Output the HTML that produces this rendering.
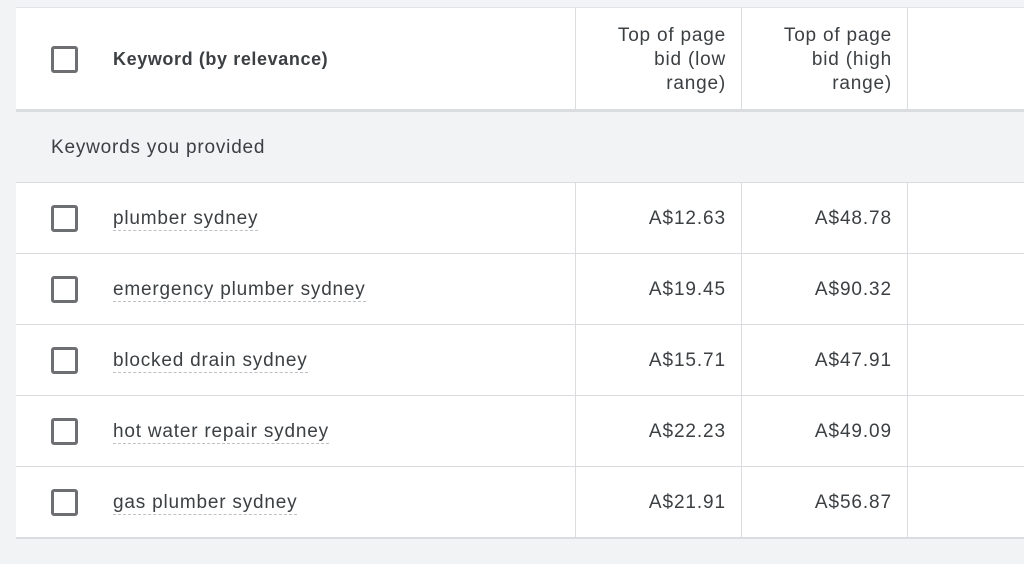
<!DOCTYPE html>
<html><head><meta charset="utf-8"><style>
*{margin:0;padding:0;box-sizing:border-box}
body{width:1024px;height:564px;background:#f1f3f4;position:relative;overflow:hidden;font-family:"Liberation Sans",Arial,sans-serif;color:#3c4043}
.abs{position:absolute}
.white{background:#fff;left:16px;right:0}
.hl{position:absolute;left:16px;right:0;height:1px;background:#dadce0}
.vl{position:absolute;width:1px;background:#dadce0}
.cb{position:absolute;left:51px;width:27px;height:27px;border:3px solid #6d6f72;border-radius:3px;background:#fff}
.kw{position:absolute;left:113px;font-size:19px;letter-spacing:0.8px;line-height:22px;border-bottom:1px dashed #bdc1c6;color:#3c4043}
.num{position:absolute;font-size:19px;letter-spacing:0.9px;line-height:22px;text-align:right;color:#3c4043}
.hd{position:absolute;font-size:19px;letter-spacing:0.8px;line-height:24px;text-align:right;color:#3c4043}
</style></head><body>
<div class="abs white" style="top:8px;height:101px"></div>
<div class="hl" style="top:7px;background:#e0e2e6"></div>
<div class="hl" style="top:109px;height:3px;background:#dadce0"></div>
<div class="hl" style="top:182px"></div>
<div class="abs white" style="top:183px;height:354px"></div>
<div class="hl" style="top:253px"></div>
<div class="hl" style="top:324px"></div>
<div class="hl" style="top:395px"></div>
<div class="hl" style="top:466px"></div>
<div class="hl" style="top:537px;height:2px"></div>
<div class="vl" style="left:575px;top:8px;height:101px"></div>
<div class="vl" style="left:741px;top:8px;height:101px"></div>
<div class="vl" style="left:907px;top:8px;height:101px"></div>
<div class="vl" style="left:575px;top:183px;height:354px"></div>
<div class="vl" style="left:741px;top:183px;height:354px"></div>
<div class="vl" style="left:907px;top:183px;height:354px"></div>

<div class="cb" style="top:46px"></div>
<div class="abs" style="left:113px;top:48px;font-size:18px;letter-spacing:0.6px;font-weight:bold;line-height:22px;color:#3c4043">Keyword (by relevance)</div>
<div class="hd" style="left:560px;width:166px;top:24px">Top of page<br>bid (low<br>range)</div>
<div class="hd" style="left:726px;width:166px;top:24px">Top of page<br>bid (high<br>range)</div>

<div class="abs" style="left:51px;top:137px;font-size:19px;letter-spacing:0.8px;line-height:22px;color:#3c4043">Keywords you provided</div>

<div class="cb" style="top:205px"></div><div class="kw" style="top:208px">plumber sydney</div>
<div class="num" style="left:560px;width:166px;top:208px">A$12.63</div><div class="num" style="left:726px;width:166px;top:208px">A$48.78</div>

<div class="cb" style="top:276px"></div><div class="kw" style="top:279px">emergency plumber sydney</div>
<div class="num" style="left:560px;width:166px;top:279px">A$19.45</div><div class="num" style="left:726px;width:166px;top:279px">A$90.32</div>

<div class="cb" style="top:347px"></div><div class="kw" style="top:350px">blocked drain sydney</div>
<div class="num" style="left:560px;width:166px;top:350px">A$15.71</div><div class="num" style="left:726px;width:166px;top:350px">A$47.91</div>

<div class="cb" style="top:418px"></div><div class="kw" style="top:421px">hot water repair sydney</div>
<div class="num" style="left:560px;width:166px;top:421px">A$22.23</div><div class="num" style="left:726px;width:166px;top:421px">A$49.09</div>

<div class="cb" style="top:489px"></div><div class="kw" style="top:492px">gas plumber sydney</div>
<div class="num" style="left:560px;width:166px;top:492px">A$21.91</div><div class="num" style="left:726px;width:166px;top:492px">A$56.87</div>
</body></html>
